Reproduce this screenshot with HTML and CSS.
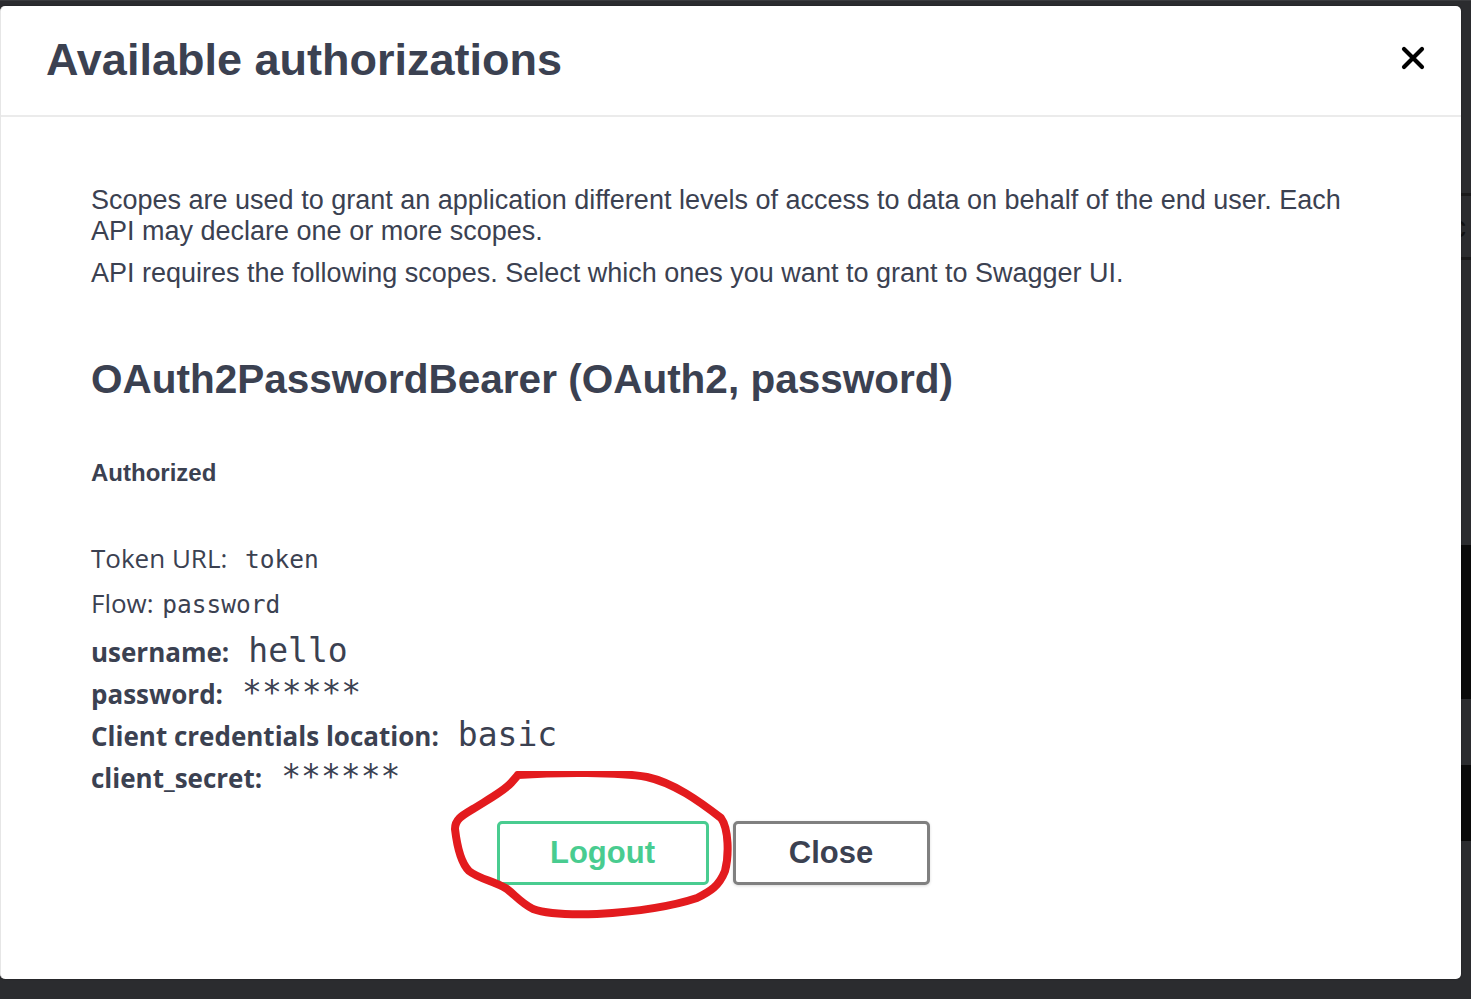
FILE: index.html
```html
<!DOCTYPE html>
<html lang="en">
<head>
<meta charset="utf-8">
<title>Available authorizations</title>
<link rel="stylesheet" href="styles.css">
</head>
<body>
<div class="backdrop">
  <div class="side">
    <div class="side-line"></div>
    <div class="side-glyph">c</div>
    <div class="side-line"></div>
    <div class="side-block b1"></div>
    <div class="side-block b2"></div>
  </div>
  <div class="modal">
    <div class="modal-header">
      <h3 class="modal-title">Available authorizations</h3>
      <button class="close-x" aria-label="Close">
        <svg width="24" height="24" viewBox="0 0 24 24"><path d="M3 3 L21 21 M21 3 L3 21" stroke="#000" stroke-width="4.2" stroke-linecap="round"/></svg>
      </button>
    </div>
    <div class="modal-body">
      <p class="scopes">Scopes are used to grant an application different levels of access to data on behalf of the end user. Each API may declare one or more scopes.</p>
      <p class="scopes second">API requires the following scopes. Select which ones you want to grant to Swagger UI.</p>
      <h4 class="scheme">OAuth2PasswordBearer (OAuth2, password)</h4>
      <h6 class="authorized">Authorized</h6>
      <p class="info">Token URL: <code class="small-code url">token</code></p>
      <p class="info flow">Flow: <code class="small-code flow-code">password</code></p>
      <div class="field"><span class="label">username:</span><code class="value">hello</code></div>
      <div class="field"><span class="label">password:</span><code class="value">******</code></div>
      <div class="field"><span class="label">Client credentials location:</span><code class="value">basic</code></div>
      <div class="field"><span class="label">client_secret:</span><code class="value">******</code></div>
      <div class="btn-row">
        <button class="btn logout">Logout</button>
        <button class="btn close">Close</button>
        <svg class="scribble" width="290" height="155" viewBox="0 0 290 155">
          <path d="M69 4 C 110 1, 170 1, 198 6 C 225 12, 250 30, 272 47 C 280 58, 280 85, 276 100 C 270 115, 262 120, 248 127 C 230 133, 200 140, 148 143 C 120 144, 95 142, 84 138 C 72 132, 66 124, 58 118 C 45 110, 30 108, 20 100 C 12 92, 8 75, 6 58 C 6 48, 14 44, 24 38 C 40 28, 55 20, 62 12 L 69 4" fill="none" stroke="#e31b1e" stroke-width="8" stroke-linecap="round" stroke-linejoin="round"/>
        </svg>
      </div>
    </div>
  </div>
</div>
</body>
</html>
```
FILE: styles.css
```css
html, body {
  margin: 0;
  padding: 0;
}
body {
  background: #2b2c2f;
  width: 1471px;
  height: 999px;
  overflow: hidden;
  font-family: "Liberation Sans", Arial, sans-serif;
  color: #3b4151;
}
.backdrop {
  position: relative;
  width: 1471px;
  height: 999px;
  border-top: 1px solid #3a3b3e;
  box-sizing: border-box;
}
.side {
  position: absolute;
  left: 1461px;
  top: 0;
  width: 10px;
  height: 999px;
  display: flex;
  flex-direction: column;
}
.side-line {
  height: 3px;
  background: #1a1a1b;
}
.side-line:first-child {
  margin-top: 192px;
}
.side-glyph {
  height: 61px;
  font-family: "Liberation Sans", Arial, sans-serif;
  font-size: 30px;
  line-height: 61px;
  color: #111;
  margin-left: -10px;
  overflow: hidden;
}
.side-block {
  background: #0a0a0a;
}
.side-block.b1 {
  margin-top: 285px;
  height: 154px;
}
.side-block.b2 {
  margin-top: 66px;
  height: 76px;
}
.modal {
  position: absolute;
  left: 0;
  top: 5px;
  width: 1461px;
  height: 973px;
  background: #fff;
  border-radius: 5px;
  box-shadow: 0 0 2px rgba(0,0,0,0.4);
  border-left: 1px solid #e6e6e6;
  box-sizing: border-box;
}
.modal-header {
  display: flex;
  align-items: center;
  justify-content: space-between;
  height: 109px;
  border-bottom: 2px solid #ebebeb;
  padding: 0 36px 0 45px;
}
.modal-title {
  margin: 0;
  font-size: 45px;
  font-weight: 700;
  color: #3b4151;
  padding-bottom: 2px;
}
.close-x {
  background: none;
  border: none;
  padding: 0;
  width: 24px;
  height: 24px;
  margin-bottom: 6px;
}
.close-x svg {
  display: block;
}
.modal-body {
  padding: 68px 90px 0 90px;
}
.scopes {
  margin: 0;
  font-size: 27px;
  line-height: 31px;
  color: #3b4151;
}
.scopes.second {
  margin-top: 11px;
}
.scheme {
  margin: 66px 0 0;
  font-size: 40.5px;
  line-height: 48px;
  font-weight: 700;
}
.authorized {
  margin: 55px 0 0;
  font-size: 24px;
  line-height: 30px;
  font-weight: 700;
}
.info {
  margin: 52px 0 0;
  font-family: "Open Sans", "Noto Sans", sans-serif;
  font-size: 26px;
  line-height: 36px;
}
.info.flow {
  margin-top: 7px;
}
.small-code {
  font-family: "DejaVu Sans Mono", monospace;
  font-size: 24.5px;
}
.small-code.url {
  margin-left: 11px;
}
.small-code.flow-code {
  margin-left: 2px;
}
.field {
  display: flex;
  align-items: baseline;
  height: 42px;
  font-family: "Open Sans", "Noto Sans", sans-serif;
  font-size: 26px;
  font-weight: 700;
}
.info.flow + .field {
  margin-top: 8px;
}
.value {
  margin-left: 19px;
  font-family: "DejaVu Sans Mono", monospace;
  font-size: 33px;
  font-weight: 400;
}
.btn-row {
  position: relative;
  display: flex;
  justify-content: center;
  gap: 24px;
  margin-top: 22px;
  padding-right: 36px;
}
.btn {
  height: 64px;
  border-radius: 5px;
  background: #fff;
  font-family: "Liberation Sans", Arial, sans-serif;
  font-size: 31px;
  font-weight: 700;
  cursor: pointer;
}
.btn.logout {
  width: 212px;
  border: 3px solid #49cc90;
  color: #49cc90;
}
.btn.close {
  width: 197px;
  border: 3px solid #808080;
  color: #3b4151;
  box-shadow: 0 1px 3px rgba(0,0,0,0.15);
}
.scribble {
  position: absolute;
  left: 358px;
  top: -50px;
}
```
